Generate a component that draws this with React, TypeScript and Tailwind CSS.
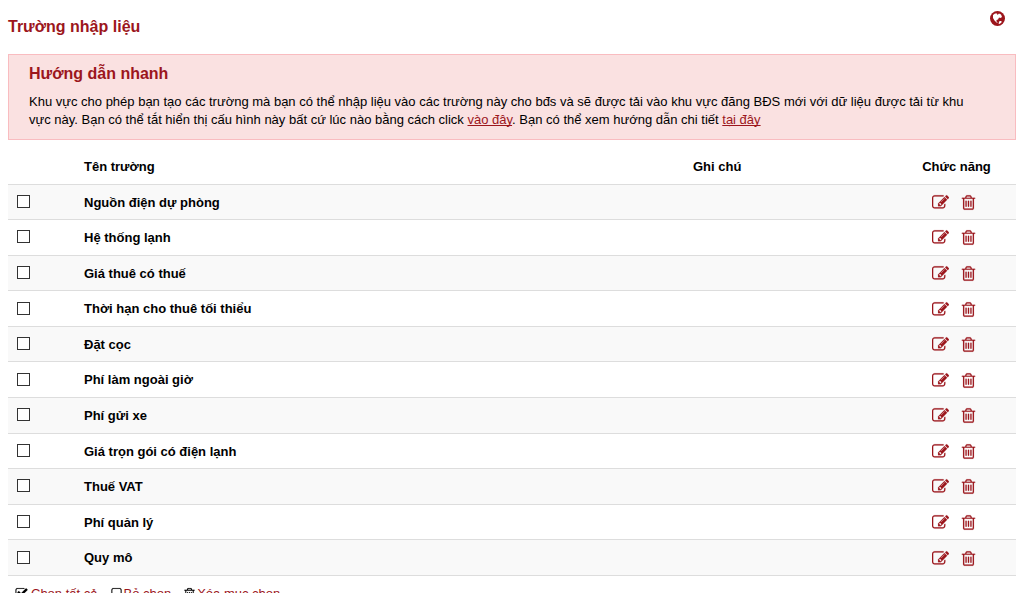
const fields = [
  "Nguồn điện dự phòng",
  "Hệ thống lạnh",
  "Giá thuê có thuế",
  "Thời hạn cho thuê tối thiểu",
  "Đặt cọc",
  "Phí làm ngoài giờ",
  "Phí gửi xe",
  "Giá trọn gói có điện lạnh",
  "Thuế VAT",
  "Phí quản lý",
  "Quy mô",
];

const icons = {
  edit: "M888 1184l116-116-152-152-116 116v56h96v96h56zm440-720q-16-16-33 1l-350 350q-17 17-1 33t33-1l350-350q17-17 1-33zm80 594v190q0 119-84.5 203.5t-203.5 84.5h-832q-119 0-203.5-84.5t-84.5-203.5v-832q0-119 84.5-203.5t203.5-84.5h832q63 0 117 25 15 7 18 23 3 17-9 29l-49 49q-14 14-32 8-23-6-45-6h-832q-66 0-113 47t-47 113v832q0 66 47 113t113 47h832q66 0 113-47t47-113v-126q0-13 9-22l64-64q15-15 35-7t20 29zm-96-738l288 288-672 672h-288v-288zm444 132l-92 92-288-288 92-92q28-28 68-28t68 28l152 152q28 28 28 68t-28 68z",
  trash: "M704 736v576q0 14-9 23t-23 9h-64q-14 0-23-9t-9-23v-576q0-14 9-23t23-9h64q14 0 23 9t9 23zm256 0v576q0 14-9 23t-23 9h-64q-14 0-23-9t-9-23v-576q0-14 9-23t23-9h64q14 0 23 9t9 23zm256 0v576q0 14-9 23t-23 9h-64q-14 0-23-9t-9-23v-576q0-14 9-23t23-9h64q14 0 23 9t9 23zm128 724v-948h-896v948q0 22 7 40.5t14.5 27 10.5 8.5h832q3 0 10.5-8.5t14.5-27 7-40.5zm-672-1076h448l-48-117q-7-9-17-11h-317q-10 2-17 11zm928 32v64q0 14-9 23t-23 9h-96v948q0 83-47 143.5t-113 60.5h-832q-66 0-113-58.5t-47-141.5v-952h-96q-14 0-23-9t-9-23v-64q0-14 9-23t23-9h309l70-167q15-37 54-63t79-26h320q40 0 79 26t54 63l70 167h309q14 0 23 9t9 23z",
  checked: "M1472 930v318q0 119-84.5 203.5t-203.5 84.5h-832q-119 0-203.5-84.5t-84.5-203.5v-832q0-119 84.5-203.5t203.5-84.5h832q63 0 117 25 15 7 18 23 3 17-9 29l-49 49q-10 10-23 10-3 0-9-2-23-6-45-6h-832q-66 0-113 47t-47 113v832q0 66 47 113t113 47h832q66 0 113-47t47-113v-254q0-13 9-22l64-64q10-10 23-10 6 0 12 3 20 8 20 29zm231-489l-814 814q-24 24-57 24t-57-24l-430-430q-24-24-24-57t24-57l110-110q24-24 57-24t57 24l263 263 647-647q24-24 57-24t57 24l110 110q24 24 24 57t-24 57z",
  unchecked: "M1312 256h-832q-66 0-113 47t-47 113v832q0 66 47 113t113 47h832q66 0 113-47t47-113v-832q0-66-47-113t-113-47zm288 160v832q0 119-84.5 203.5t-203.5 84.5h-832q-119 0-203.5-84.5t-84.5-203.5v-832q0-119 84.5-203.5t203.5-84.5h832q119 0 203.5 84.5t84.5 203.5z",
};

function Icon({ name, className }: { name: keyof typeof icons; className: string }) {
  return (
    <svg
      viewBox="0 0 1792 1792"
      fill="currentColor"
      stroke="currentColor"
      strokeWidth={15}
      className={className}
      aria-hidden="true"
    >
      <path d={icons[name]} />
    </svg>
  );
}

function Globe() {
  return (
    <svg viewBox="0 0 30 30" className="size-[15px]" aria-hidden="true">
      <circle cx="15" cy="15" r="15" fill="currentColor" />
      <path
        fill="#fff"
        d="M6 8l4-3 4 0 1 3 3-3 4 2 2 5-3 2-3-1-2 4-3 1 0 3 3 3-3-1-4-4-3-5zM19 20l4 0 0 3-4 3-2-1z"
      />
    </svg>
  );
}

const linkClass = "text-[#9c161c] underline [text-decoration-skip-ink:none]";

export default function App() {
  return (
    <main className="px-2 font-['Liberation_Sans',Arial,sans-serif] text-[13px] text-black">
      <header className="flex h-[54px] items-start justify-between pr-[11px]">
        <h1 className="pt-[17px] text-base/5 font-bold text-[#9c161c]">Trường nhập liệu</h1>
        <button type="button" aria-label="Ngôn ngữ" className="pt-[11px] text-[#9c161c]">
          <Globe />
        </button>
      </header>

      <section className="border border-[#f9bcc0] bg-[#fae1e1] pt-[9px] pr-10 pb-[10px] pl-5">
        <h2 className="mb-[9px] text-base/5 font-bold text-[#9c161c]">Hướng dẫn nhanh</h2>
        <p className="leading-[18px]">
          Khu vực cho phép bạn tạo các trường mà bạn có thể nhập liệu vào các trường này cho bđs và
          sẽ được tải vào khu vực đăng BĐS mới với dữ liệu được tải từ khu vực này. Bạn có thể tắt
          hiển thị cấu hình này bất cứ lúc nào bằng cách click{" "}
          <a href="#hide" className={linkClass}>vào đây</a>. Bạn có thể xem hướng dẫn chi tiết{" "}
          <a href="#guide" className={linkClass}>tại đây</a>
        </p>
      </section>

      <table className="mt-[9px] w-full table-fixed border-collapse text-left leading-[1.43]">
        <thead>
          <tr>
            <th className="w-[68px] p-2" aria-label="Chọn" />
            <th className="px-2 pt-[9px] pb-[7px]">Tên trường</th>
            <th className="w-[212px] px-2 pt-[9px] pb-[7px]">Ghi chú</th>
            <th className="w-[119px] px-2 pt-[9px] pb-[7px] text-center">Chức năng</th>
          </tr>
        </thead>
        <tbody className="border-b border-[#ddd]">
          {fields.map((field) => (
            <tr key={field} className="border-t border-[#ddd] odd:bg-[#f9f9f9]">
              <td className="px-[9px] pb-px">
                <input
                  type="checkbox"
                  aria-label={field}
                  className="block size-[13px] appearance-none border border-[#333] bg-white checked:bg-[#9c161c]"
                />
              </td>
              <td className="px-2 pt-[9px] pb-[7px] font-bold">{field}</td>
              <td />
              <td>
                <div className="flex items-center justify-center gap-[11px] pt-px pr-1 text-[#9c161c]">
                  <button type="button" aria-label={`Sửa ${field}`}>
                    <Icon name="edit" className="size-[17px]" />
                  </button>
                  <button type="button" aria-label={`Xóa ${field}`}>
                    <Icon name="trash" className="size-[17px]" />
                  </button>
                </div>
              </td>
            </tr>
          ))}
        </tbody>
      </table>

      <footer className="flex gap-3 px-[7px] pt-[9px] leading-[18px] text-[#9c161c]">
        <button type="button" className="flex items-center gap-[3px]">
          <Icon name="checked" className="size-[13px] text-black" />
          Chọn tất cả
        </button>
        <button type="button" className="flex items-center gap-px">
          <Icon name="unchecked" className="size-[13px] text-black" />
          Bỏ chọn
        </button>
        <button type="button" className="flex items-center gap-px">
          <Icon name="trash" className="size-[13px] text-black" />
          Xóa mục chọn
        </button>
      </footer>
    </main>
  );
}
